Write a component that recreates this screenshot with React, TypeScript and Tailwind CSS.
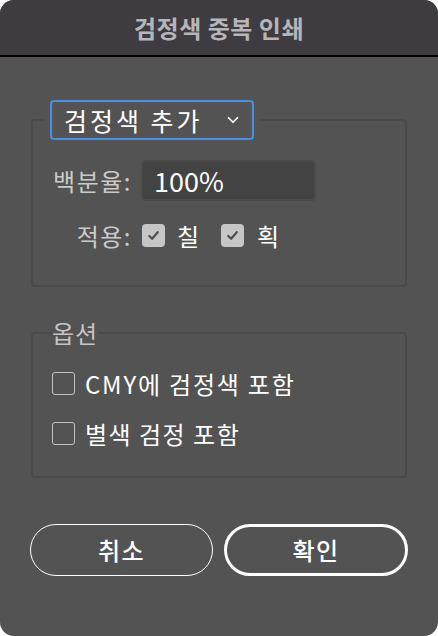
import { ChevronDown } from 'lucide-react';

const font = { fontFamily: '"Noto Sans CJK KR", "Noto Sans", sans-serif' };

function CheckBox({ checked }: { checked: boolean }) {
  if (checked) {
    return (
      <span className="flex h-[23px] w-[23px] shrink-0 items-center justify-center rounded-[4px] bg-[#c6c6c6]">
        <svg width="15" height="15" viewBox="0 0 16 16" fill="none">
          <path d="M3.5 8.5 L6.5 11.5 L12.5 4.5" stroke="#505050" strokeWidth="2.4" strokeLinecap="round" strokeLinejoin="round" />
        </svg>
      </span>
    );
  }
  return <span className="h-[23px] w-[23px] shrink-0 rounded-[3px] border-[1.5px] border-[#c2c2c2]" />;
}

export default function App() {
  return (
    <div className="h-[636px] w-[438px] bg-white" style={font}>
      <div className="flex h-full flex-col overflow-hidden rounded-[14px] bg-[#535353]">
        <div className="flex h-[57px] shrink-0 items-center justify-center border-b-2 border-black bg-[#3e3c40]">
          <h1 className="text-[24px] font-bold leading-[28px] tracking-[0.5px] text-[#b6b5b9]">검정색 중복 인쇄</h1>
        </div>

        <div className="flex flex-col px-[30px] pt-[43px]">
          <fieldset className="mx-[1px] rounded-[4px] border-2 border-[#4a4a4a] pb-[38px] pl-[12px] pt-[20px]">
            <legend className="px-[5px]">
              <div className="flex h-[40px] w-[204px] items-center justify-between rounded-[4px] border-2 border-[#4b8fe0] pl-[12px] pr-[10px] text-white">
                <span className="text-[25px] leading-[28px] tracking-[3px]">검정색 추가</span>
                <ChevronDown size={18} strokeWidth={2.2} />
              </div>
            </legend>
            <div className="flex flex-col gap-[23px]">
              <div className="flex items-center gap-[9px]">
                <span className="w-[87px] whitespace-nowrap text-right text-[24px] leading-[28px] tracking-[1.5px] text-[#cacaca]">백분율:</span>
                <div className="flex h-[41px] w-[175px] items-center rounded-[4px] border-2 border-[#4b4b4b] bg-[#434343] px-[11px] text-[27px] leading-[32px] text-white">
                  100%
                </div>
              </div>
              <div className="flex h-[23px] items-center">
                <span className="w-[87px] whitespace-nowrap text-right text-[24px] leading-[28px] tracking-[1.5px] text-[#cacaca]">적용:</span>
                <div className="ml-[10px] flex items-center gap-[12px]">
                  <CheckBox checked />
                  <span className="text-[24px] leading-[28px] text-white">칠</span>
                </div>
                <div className="ml-[22px] flex items-center gap-[13px]">
                  <CheckBox checked />
                  <span className="text-[24px] leading-[28px] text-white">획</span>
                </div>
              </div>
            </div>
          </fieldset>

          <fieldset className="mx-[1px] mt-[33px] rounded-[4px] border-2 border-[#4a4a4a] pb-[31px] pl-[19px] pt-[26px]">
            <legend className="text-[24px] leading-[26px] tracking-[1px] text-[#c4c4c4]">옵션</legend>
            <div className="flex flex-col gap-[27px]">
              <label className="flex h-[23px] items-center gap-[10px]">
                <CheckBox checked={false} />
                <span className="whitespace-nowrap text-[24px] leading-[28px] tracking-[1.8px] text-white">CMY에 검정색 포함</span>
              </label>
              <label className="flex h-[23px] items-center gap-[10px]">
                <CheckBox checked={false} />
                <span className="whitespace-nowrap text-[24px] leading-[28px] tracking-[1.5px] text-white">별색 검정 포함</span>
              </label>
            </div>
          </fieldset>

          <div className="mt-[46px] flex gap-[11px]">
            <button className="flex h-[52px] w-[183px] items-center justify-center rounded-full border-[1.5px] border-white text-[24px] font-medium leading-[28px] tracking-[1.5px] text-white">
              취소
            </button>
            <button className="flex h-[52px] w-[184px] items-center justify-center rounded-full border-[3px] border-white text-[24px] font-medium leading-[28px] tracking-[1.5px] text-white">
              확인
            </button>
          </div>
        </div>
      </div>
    </div>
  );
}
